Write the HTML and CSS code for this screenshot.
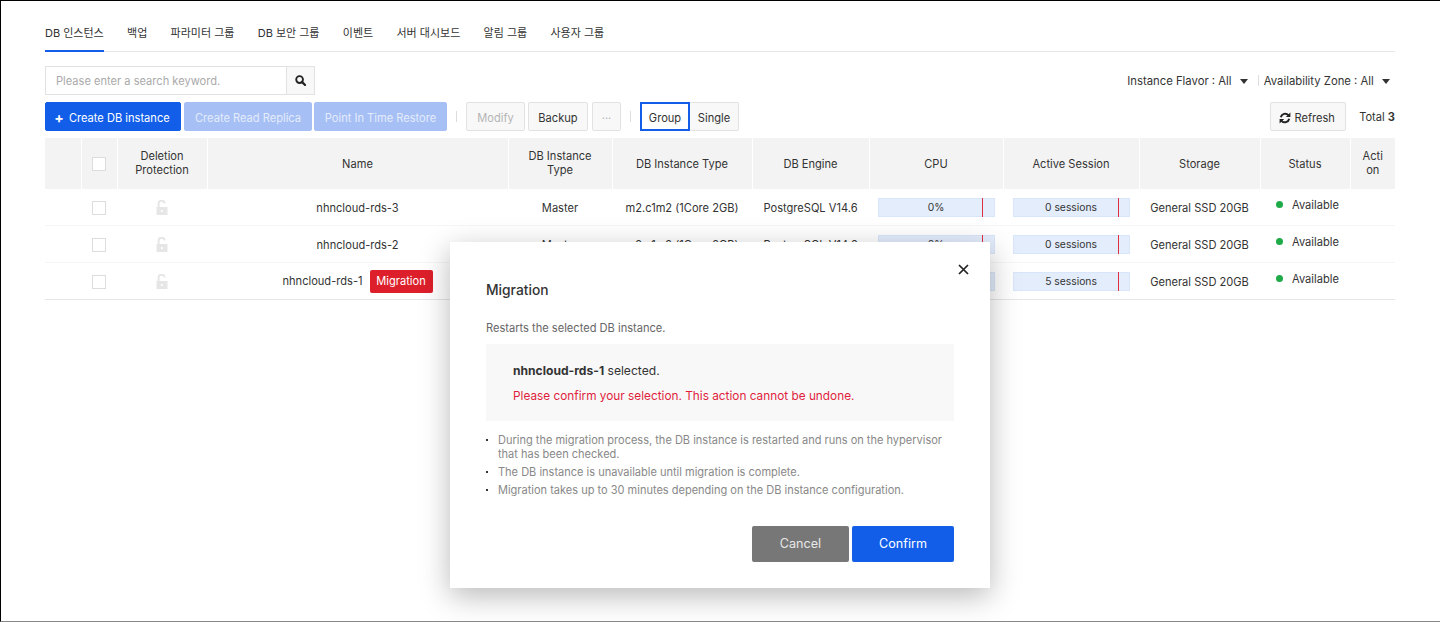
FILE: index.html
```html
<!DOCTYPE html>
<html lang="ko">
<head>
    <meta charset="UTF-8"/>
    <title>DB 인스턴스</title>
    <link rel="stylesheet" href="styles.css">
</head>
<body>
<div class="page">
    <ul class="tabs">
        <li class="on">DB 인스턴스</li>
        <li>백업</li>
        <li>파라미터 그룹</li>
        <li>DB 보안 그룹</li>
        <li>이벤트</li>
        <li>서버 대시보드</li>
        <li>알림 그룹</li>
        <li>사용자 그룹</li>
    </ul>

    <div class="search-row">
        <div class="search">
            <span class="search-input">Please enter a search keyword.</span>
            <span class="search-btn">
                <svg width="11" height="11" viewBox="0 0 12 12"><circle cx="5" cy="5" r="3.7" fill="none" stroke="#222" stroke-width="2"/><path d="M7.8 7.8 L11 11" stroke="#222" stroke-width="2.4" stroke-linecap="round"/></svg>
            </span>
        </div>
        <div class="filters">
            <span class="filter">Instance Flavor : All <i class="caret"></i></span>
            <span class="filter-sep"></span>
            <span class="filter">Availability Zone : All <i class="caret"></i></span>
        </div>
    </div>

    <div class="toolbar">
        <button class="btn primary create"><b>+</b> Create DB instance</button>
        <button class="btn faded w128">Create Read Replica</button>
        <button class="btn faded w133">Point In Time Restore</button>
        <span class="sep"></span>
        <button class="btn dim w59">Modify</button>
        <button class="btn w60">Backup</button>
        <button class="btn dim w29">···</button>
        <span class="sep"></span>
        <div class="toggle">
            <button class="btn active">Group</button>
            <button class="btn single">Single</button>
        </div>
        <button class="btn refresh">
            <svg width="12" height="12" viewBox="0 0 12 12"><path d="M1.8 5.2 A4.4 4.4 0 0 1 9.4 3.2 M10.2 6.8 A4.4 4.4 0 0 1 2.6 8.8" fill="none" stroke="#222" stroke-width="2"/><path d="M11.4 0.4 V5 H6.8 Z M0.6 11.6 V7 H5.2 Z" fill="#222"/></svg>
            Refresh
        </button>
        <span class="total">Total <b>3</b></span>
    </div>

    <table class="grid">
        <colgroup>
            <col class="c36"><col class="c36"><col class="c90"><col class="c301"><col class="c104"><col class="c140"><col class="c117"><col class="c134"><col class="c136"><col class="c121"><col class="c90"><col class="c45">
        </colgroup>
        <thead>
            <tr>
                <th></th>
                <th><span class="check"></span></th>
                <th><div class="two">Deletion<br/>Protection</div></th>
                <th>Name</th>
                <th><div class="two">DB Instance<br/>Type</div></th>
                <th>DB Instance Type</th>
                <th>DB Engine</th>
                <th>CPU</th>
                <th>Active Session</th>
                <th>Storage</th>
                <th>Status</th>
                <th><div class="two">Acti<br/>on</div></th>
            </tr>
        </thead>
        <tbody>
            <tr>
                <td></td>
                <td><span class="check"></span></td>
                <td><svg class="lock" width="12" height="15" viewBox="0 0 12 15"><path d="M2.6 7 V4 a3 3 0 0 1 6 -0.6" fill="none" stroke="#e6e6e6" stroke-width="2"/><path d="M0.5 7 H11.5 V15 H0.5 Z" fill="#e6e6e6"/><circle cx="6" cy="11" r="1.1" fill="#fff"/></svg></td>
                <td>nhncloud-rds-3</td>
                <td>Master</td>
                <td>m2.c1m2 (1Core 2GB)</td>
                <td>PostgreSQL V14.6</td>
                <td><div class="meter cpu">0%<i></i></div></td>
                <td><div class="meter sess">0 sessions<i></i></div></td>
                <td>General SSD 20GB</td>
                <td><span class="status"><i></i>Available</span></td>
                <td></td>
            </tr>
            <tr>
                <td></td>
                <td><span class="check"></span></td>
                <td><svg class="lock" width="12" height="15" viewBox="0 0 12 15"><path d="M2.6 7 V4 a3 3 0 0 1 6 -0.6" fill="none" stroke="#e6e6e6" stroke-width="2"/><path d="M0.5 7 H11.5 V15 H0.5 Z" fill="#e6e6e6"/><circle cx="6" cy="11" r="1.1" fill="#fff"/></svg></td>
                <td>nhncloud-rds-2</td>
                <td>Master</td>
                <td>m2.c1m2 (1Core 2GB)</td>
                <td>PostgreSQL V14.6</td>
                <td><div class="meter cpu">0%<i></i></div></td>
                <td><div class="meter sess">0 sessions<i></i></div></td>
                <td>General SSD 20GB</td>
                <td><span class="status"><i></i>Available</span></td>
                <td></td>
            </tr>
            <tr>
                <td></td>
                <td><span class="check"></span></td>
                <td><svg class="lock" width="12" height="15" viewBox="0 0 12 15"><path d="M2.6 7 V4 a3 3 0 0 1 6 -0.6" fill="none" stroke="#e6e6e6" stroke-width="2"/><path d="M0.5 7 H11.5 V15 H0.5 Z" fill="#e6e6e6"/><circle cx="6" cy="11" r="1.1" fill="#fff"/></svg></td>
                <td>nhncloud-rds-1<span class="tag">Migration</span></td>
                <td>Master</td>
                <td>m2.c1m2 (1Core 2GB)</td>
                <td>PostgreSQL V14.6</td>
                <td><div class="meter cpu">0%<i></i></div></td>
                <td><div class="meter sess">5 sessions<i></i></div></td>
                <td>General SSD 20GB</td>
                <td><span class="status"><i></i>Available</span></td>
                <td></td>
            </tr>
        </tbody>
    </table>
</div>

<div class="modal">
    <svg class="close" width="11" height="11" viewBox="0 0 11 11"><path d="M1 1 L10 10 M10 1 L1 10" stroke="#222" stroke-width="1.7"/></svg>
    <h2>Migration</h2>
    <p class="lead">Restarts the selected DB instance.</p>
    <div class="confirm-box">
        <p><b>nhncloud-rds-1</b> selected.</p>
        <p class="warn">Please confirm your selection. This action cannot be undone.</p>
    </div>
    <ul class="notes">
        <li>During the migration process, the DB instance is restarted and runs on the hypervisor that has been checked.</li>
        <li>The DB instance is unavailable until migration is complete.</li>
        <li>Migration takes up to 30 minutes depending on the DB instance configuration.</li>
    </ul>
    <div class="modal-btns">
        <button class="big cancel">Cancel</button>
        <button class="big ok">Confirm</button>
    </div>
</div>
</body>
</html>
```

FILE: styles.css
```css
html {background:#fff;}
body {color:#333;font:11.1px/14px Inter, "Noto Sans CJK KR", sans-serif;height:622px;margin:0;overflow:hidden;position:relative;box-sizing:border-box;border:solid #000;border-width:1px 0 1px 1px;border-bottom-color:#888;}
button {font:inherit;}
.page {padding:0 44px;width:1350px;}

.tabs {border-bottom:1px solid #e8e8e8;display:flex;gap:23.3px;height:50px;list-style:none;margin:0;padding:0;}
.tabs li {box-sizing:border-box;font-size:11px;height:51px;line-height:14px;padding-top:25px;}
.tabs li.on {border-bottom:2px solid #125ee8;}

.search-row {align-items:center;display:flex;justify-content:space-between;margin-top:14px;}
.search {border:1px solid #e2e2e2;box-sizing:border-box;display:flex;height:29px;width:270px;}
.search-input {color:#aaa;flex:1;line-height:29px;padding-left:10px;}
.search-btn {align-items:center;background:#f8f8f8;border-left:1px solid #e2e2e2;display:flex;justify-content:center;width:27px;}
.filters {align-items:center;display:flex;padding-right:5px;}
.filter {font-size:11.3px;}
.filter-sep {background:#ddd;height:11px;margin:0 5px 0 10px;width:1px;}
.caret {border-left:4px solid transparent;border-right:4px solid transparent;border-top:5px solid #333;display:inline-block;margin-left:5px;vertical-align:1px;}

.toolbar {align-items:center;display:flex;margin-top:7px;}
.btn {background:#f8f8f8;border:1px solid #e2e2e2;border-radius:2px;box-sizing:border-box;color:#333;height:29px;margin-right:3px;padding:2px 0 0;}
.btn.primary {background:#125ee8;border-color:#125ee8;color:#fff;}
.btn.create {padding-right:2px;width:136px;}
.btn.create b {font-size:14px;line-height:0;margin-right:2px;vertical-align:-1px;}
.btn.faded {background:#a6bff5;border-color:#a6bff5;color:#e4ecfb;}
.btn.dim {color:#b5b5b5;}
.w128 {margin-right:2px;width:128px;}
.w133 {width:133px;}
.w59 {width:59px;}
.w60 {margin-right:4px;width:60px;}
.w29 {width:29px;}
.sep {background:#ddd;height:11px;margin:0 9px 0 6px;width:1px;}
.toggle {display:flex;}
.toggle .btn {margin:0;}
.btn.active {background:#fff;border:2px solid #125ee8;border-radius:0;padding-top:2px;width:50px;}
.btn.single {border-left:0;width:49px;}
.btn.refresh {margin-left:auto;margin-right:13px;padding-right:2px;width:76px;}
.btn.refresh svg {vertical-align:-2px;}
.total b {font-weight:700;}

.grid {border-bottom:1px solid #e6e6e6;border-collapse:collapse;margin-top:7px;table-layout:fixed;width:1350px;}
.c36 {width:36px;}
.c90 {width:90px;}
.c301 {width:301px;}
.c104 {width:104px;}
.c140 {width:140px;}
.c117 {width:117px;}
.c134 {width:134px;}
.c136 {width:136px;}
.c121 {width:121px;}
.c45 {width:45px;}
.grid th {background:#f3f3f3;border-left:1px solid #fff;font-weight:400;height:51px;padding:0;}
.grid th:first-child {border-left:0;}
.two {margin-bottom:1px;}
.grid td {border-bottom:1px solid #f6f6f6;height:35px;padding:1px 0 0;text-align:center;}
.grid tr:last-child td {border-bottom:0;}
.check {background:#fff;border:1px solid #ddd;box-sizing:border-box;display:inline-block;height:14px;vertical-align:middle;width:14px;}
.lock {display:inline-block;vertical-align:middle;}
.tag {background:#dc1f2b;border-radius:2px;color:#fff;display:inline-block;height:23px;line-height:23px;margin-left:7px;width:63px;}
.meter {background:#e3edfc;border:1px solid #d9e5fa;box-sizing:border-box;font-size:10.3px;height:19px;line-height:17px;margin:0 auto;position:relative;}
.meter.cpu {width:117px;}
.meter.sess {width:117px;}
.meter i {background:#e03040;bottom:-1px;position:absolute;top:-1px;width:1px;}
.meter.cpu i {left:103px;}
.meter.sess i {left:104px;}
.status {display:block;margin-top:-5px;padding:0 0 0 16px;text-align:left;}
.status i {background:#1faa48;border-radius:50%;display:inline-block;height:7px;margin-right:9px;vertical-align:1px;width:7px;}

.modal {background:#fff;box-shadow:0 8px 28px rgba(0,0,0,.28);box-sizing:border-box;height:346px;left:449px;padding:0 36px;position:absolute;top:241px;width:540px;}
.close {position:absolute;right:21px;top:22px;}
.modal h2 {font-size:13.8px;font-weight:500;line-height:18px;margin:39px 0 0;}
.lead {color:#666;margin:22px 0 0;}
.confirm-box {background:#f8f8f8;box-sizing:border-box;height:77px;margin-top:9px;padding:19px 27px 0;}
.confirm-box p {font-size:12.1px;line-height:16px;margin:0;}
.confirm-box b {font-weight:700;}
.confirm-box .warn {color:#e01e3c;font-size:11.82px;margin-top:9px;}
.notes {color:#888;font-size:11.03px;line-height:14px;list-style:none;margin:12px 0 0;padding:0;}
.notes li {margin-bottom:4px;padding-left:12px;position:relative;}
.notes li::before {background:#333;content:"";height:2px;left:0;position:absolute;top:6px;width:2px;}
.modal-btns {display:flex;gap:3px;justify-content:flex-end;margin-top:29px;}
.big {border:0;border-radius:2px;color:#fff;font-size:12.6px;height:36px;}
.big.cancel {background:#777;color:#e8e8e8;width:97px;}
.big.ok {background:#125ee8;width:102px;}
```
